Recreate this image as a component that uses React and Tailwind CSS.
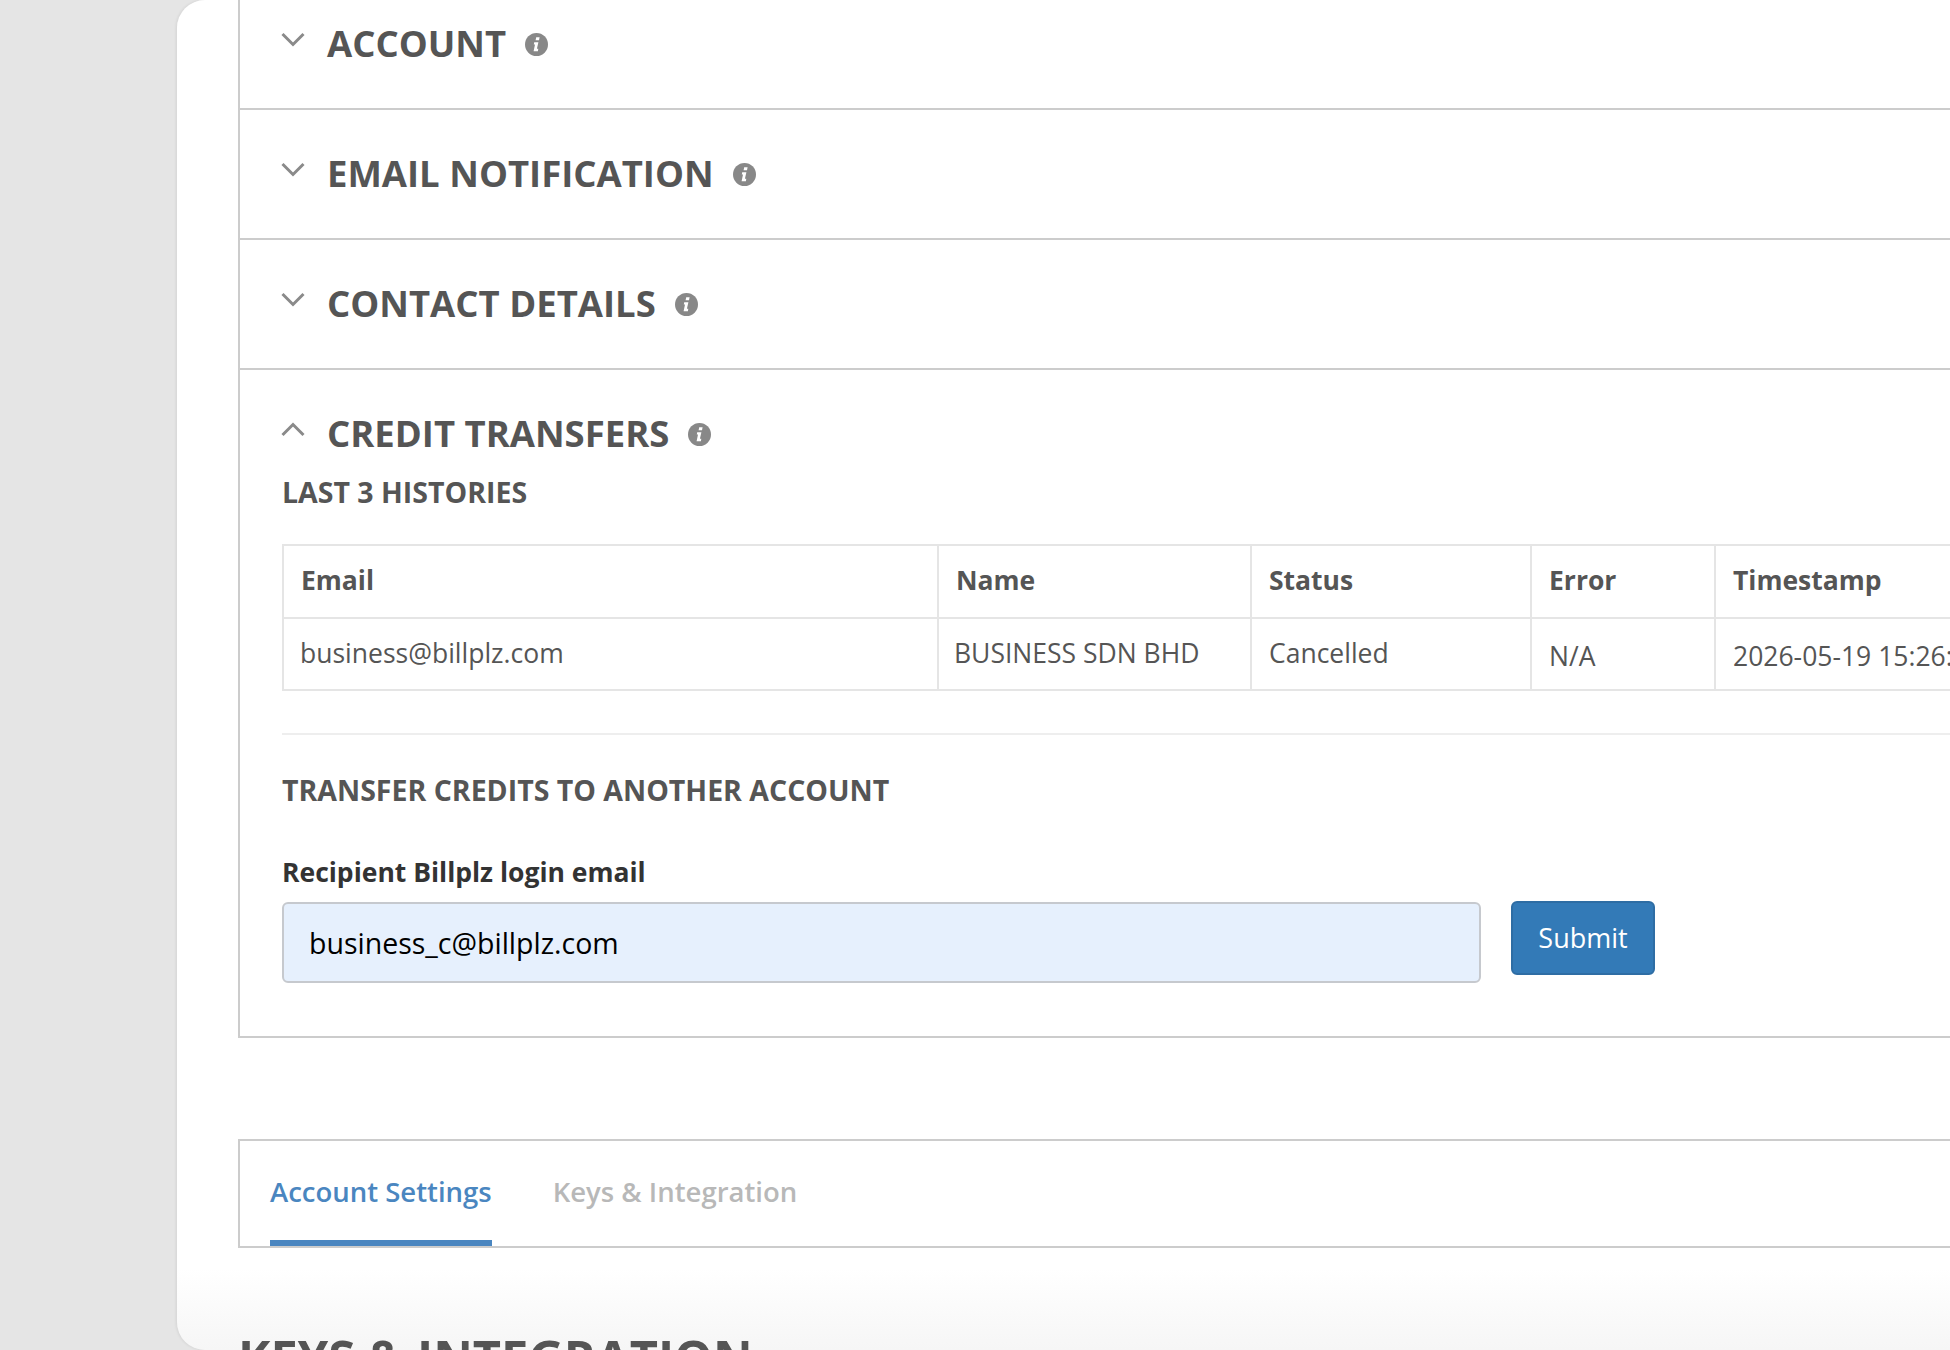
function Chevron({ up }) {
  return (
    <svg width="24" height="15" viewBox="0 0 24 15" fill="none" className="mt-[12px] shrink-0">
      <polyline
        points={up ? '1.5,13 12,2.5 22.5,13' : '1.5,2 12,12.5 22.5,2'}
        stroke="#8a8a8a"
        strokeWidth="3"
      />
    </svg>
  )
}

function InfoIcon() {
  return (
    <svg width="23" height="23" viewBox="0 0 23 23" className="ml-[19px] mt-[13px] shrink-0">
      <circle cx="11.5" cy="11.5" r="11.5" fill="#888888" />
      <path d="M11.2 4.2h3.4l-.6 3h-3.4z" fill="#ffffff" />
      <path d="M9.2 9.2h4.2l-1.5 6.6h1.4l-.4 2.4H8.6l1.4-6.8H8.8z" fill="#ffffff" />
    </svg>
  )
}

function SectionHead({ title, open }) {
  return (
    <div className="flex items-start pt-10 pl-[41px]">
      <Chevron up={open} />
      <h2 className="ml-[22px] text-[36.5px] leading-[47px] font-bold text-[#555555]">{title}</h2>
      <InfoIcon />
    </div>
  )
}

const cell = 'border-2 border-[#e5e5e5] px-[17px] pb-[1px] text-left align-middle'

export default function App() {
  return (
    <div className="h-[1350px] w-full overflow-hidden bg-[#e5e5e5] pl-[177px] font-['Open_Sans',sans-serif]">
      <div className="h-full w-[2000px] overflow-hidden rounded-l-[28px] bg-linear-to-b from-white from-[94%] to-[#f6f6f6] pl-[61px] shadow-[-1px_0_3px_rgba(0,0,0,0.08)]">
        <div className="-mt-5 w-[1900px] border-2 border-t-0 border-[#cccccc]">
          {['ACCOUNT', 'EMAIL NOTIFICATION', 'CONTACT DETAILS'].map((title) => (
            <div key={title} className="h-[130px] border-b-2 border-[#cccccc]">
              <SectionHead title={title} />
            </div>
          ))}

          <div>
            <SectionHead title="CREDIT TRANSFERS" open />
            <div className="pb-[53px] pl-[42px]">
              <h3 className="mt-[17px] text-[28.5px] leading-9 font-bold text-[#555555]">LAST 3 HISTORIES</h3>
              <table className="mt-[34px] w-[1850px] table-fixed border-collapse text-[26.5px] text-[#555555]">
                <colgroup>
                  <col className="w-[655px]" />
                  <col className="w-[313px]" />
                  <col className="w-[280px]" />
                  <col className="w-[184px]" />
                  <col />
                </colgroup>
                <thead>
                  <tr className="h-[73px]">
                    <th className={cell + ' font-bold'}>Email</th>
                    <th className={cell + ' font-bold'}>Name</th>
                    <th className={cell + ' font-bold'}>Status</th>
                    <th className={cell + ' font-bold'}>Error</th>
                    <th className={cell + ' font-bold'}>Timestamp</th>
                  </tr>
                </thead>
                <tbody>
                  <tr className="h-[72px]">
                    <td className={cell + ' pl-[16px]'}>business@billplz.com</td>
                    <td className={cell + ' pl-[15px]'}>BUSINESS SDN BHD</td>
                    <td className={cell}>Cancelled</td>
                    <td className={cell + ' pt-[7px]'}>N/A</td>
                    <td className={cell + ' pt-[7px]'}>2026-05-19 15:26:41</td>
                  </tr>
                </tbody>
              </table>

              <div className="mt-[42px] border-t-2 border-[#eeeeee]" />

              <h3 className="mt-[37px] text-[28.5px] leading-9 font-bold text-[#555555]">
                TRANSFER CREDITS TO ANOTHER ACCOUNT
              </h3>

              <label className="mt-[46px] block text-[26.5px] leading-9 font-bold text-[#333333]">
                Recipient Billplz login email
              </label>
              <div className="mt-[10px] flex items-start gap-[30px]">
                <input
                  readOnly
                  value="business_c@billplz.com"
                  className="mt-0.5 h-[81px] w-[1199px] rounded-md border-2 border-[#c6c9ce] bg-[#e6f0fd] pl-[25px] text-[28.5px] text-black outline-none"
                />
                <button
                  type="button"
                  className="mt-px h-[74px] w-[144px] rounded-md border-2 border-[#2e6da4] bg-[#337ab7] text-[27px] font-medium text-white"
                >
                  Submit
                </button>
              </div>
            </div>
          </div>
        </div>

        <div className="mt-[101px] flex h-[109px] w-[1900px] items-stretch gap-[61px] border-2 border-[#cccccc] pl-[30px] text-[27.5px] font-semibold">
          <div className="flex items-center border-b-[6px] border-[#4a86c0] pt-[2px] text-[#4a86c0]">Account Settings</div>
          <div className="flex items-center pb-1 text-[#b8b8b8]">Keys &amp; Integration</div>
        </div>

        <h1 className="mt-[77px] text-[48.8px] leading-[64px] font-bold text-[#555555]">KEYS &amp; INTEGRATION</h1>
      </div>
    </div>
  )
}
